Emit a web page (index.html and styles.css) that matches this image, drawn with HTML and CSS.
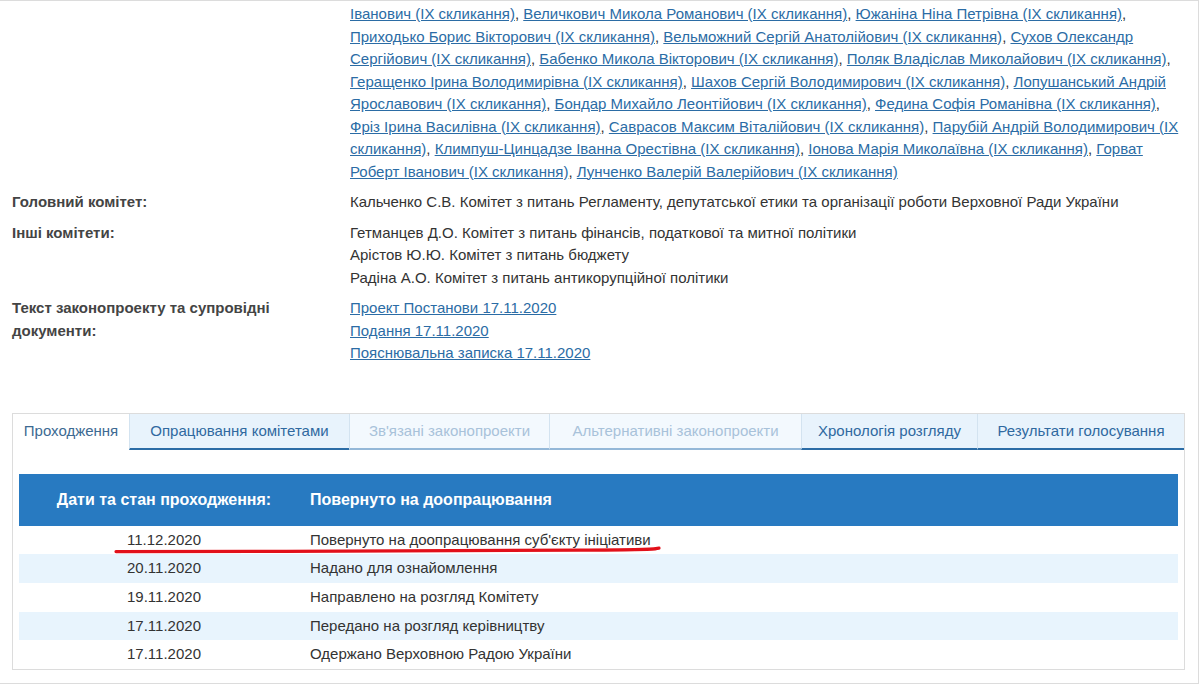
FILE: index.html
```html
<!DOCTYPE html>
<html lang="uk">
<head>
<meta charset="utf-8">
<title>Законопроект</title>
<link rel="stylesheet" href="styles.css">
</head>
<body>
<div class="page">
  <div class="info">
    <div class="label"></div>
    <div class="value"><a href="#">Іванович (IX скликання)</a>, <a href="#">Величкович Микола Романович (IX скликання)</a>, <a href="#">Южаніна Ніна Петрівна (IX скликання)</a>, <a href="#">Приходько Борис Вікторович (IX скликання)</a>, <a href="#">Вельможний Сергій Анатолійович (IX скликання)</a>, <a href="#">Сухов Олександр Сергійович (IX скликання)</a>, <a href="#">Бабенко Микола Вікторович (IX скликання)</a>, <a href="#">Поляк Владіслав Миколайович (IX скликання)</a>, <a href="#">Геращенко Ірина Володимирівна (IX скликання)</a>, <a href="#">Шахов Сергій Володимирович (IX скликання)</a>, <a href="#">Лопушанський Андрій Ярославович (IX скликання)</a>, <a href="#">Бондар Михайло Леонтійович (IX скликання)</a>, <a href="#">Федина Софія Романівна (IX скликання)</a>, <a href="#">Фріз Ірина Василівна (IX скликання)</a>, <a href="#">Саврасов Максим Віталійович (IX скликання)</a>, <a href="#">Парубій Андрій Володимирович (IX скликання)</a>, <a href="#">Климпуш-Цинцадзе Іванна Орестівна (IX скликання)</a>, <a href="#">Іонова Марія Миколаївна (IX скликання)</a>, <a href="#">Горват Роберт Іванович (IX скликання)</a>, <a href="#">Лунченко Валерій Валерійович (IX скликання)</a></div>

    <div class="label">Головний комітет:</div>
    <div class="value">Кальченко С.В. Комітет з питань Регламенту, депутатської етики та організації роботи Верховної Ради України</div>

    <div class="label">Інші комітети:</div>
    <div class="value">
      <div>Гетманцев Д.О. Комітет з питань фінансів, податкової та митної політики</div>
      <div>Арістов Ю.Ю. Комітет з питань бюджету</div>
      <div>Радіна А.О. Комітет з питань антикорупційної політики</div>
    </div>

    <div class="label">Текст законопроекту та супровідні документи:</div>
    <div class="value">
      <div><a href="#">Проект Постанови 17.11.2020</a></div>
      <div><a href="#">Подання 17.11.2020</a></div>
      <div><a href="#">Пояснювальна записка 17.11.2020</a></div>
    </div>
  </div>

  <div class="tabbox">
    <div class="tabs">
      <div class="tab active t1">Проходження</div>
      <div class="tab t2">Опрацювання комітетами</div>
      <div class="tab disabled t3">Зв'язані законопроекти</div>
      <div class="tab disabled t4">Альтернативні законопроекти</div>
      <div class="tab t5">Хронологія розгляду</div>
      <div class="tab t6">Результати голосування</div>
    </div>
    <div class="tabcontent">
      <div class="thead">
        <div class="c1">Дати та стан проходження:</div>
        <div class="c2">Повернуто на доопрацювання</div>
      </div>
      <div class="rows">
        <div class="row"><div class="c1">11.12.2020</div><div class="c2">Повернуто на доопрацювання суб'єкту ініціативи</div></div>
        <div class="row"><div class="c1">20.11.2020</div><div class="c2">Надано для ознайомлення</div></div>
        <div class="row"><div class="c1">19.11.2020</div><div class="c2">Направлено на розгляд Комітету</div></div>
        <div class="row"><div class="c1">17.11.2020</div><div class="c2">Передано на розгляд керівництву</div></div>
        <div class="row"><div class="c1">17.11.2020</div><div class="c2">Одержано Верховною Радою України</div></div>
      </div>
    </div>
  </div>

  <svg class="redline" width="560" height="12" viewBox="0 0 560 12" aria-hidden="true">
    <path d="M6 7.6 C 160 7.4, 380 6.8, 470 6.2 S 540 5, 549 4.2" fill="none" stroke="#e2101a" stroke-width="3.2" stroke-linecap="round"/>
  </svg>
</div>
</body>
</html>
```

FILE: styles.css
```css
html, body {
  margin: 0;
  padding: 0;
  background: #fff;
}

body {
  font-family: "Liberation Sans", Arial, sans-serif;
  font-size: 15px;
  color: #333;
}

.page {
  position: relative;
  width: 1198px;
  border-top: 1px solid #dcdcdc;
  border-right: 1px solid #dcdcdc;
  border-bottom: 1px solid #dcdcdc;
  padding: 2px 0 13px;
}

.info {
  display: grid;
  grid-template-columns: 326px 835px;
  column-gap: 12px;
  row-gap: 8px;
  padding-left: 12px;
  line-height: 22.5px;
}

.label {
  font-weight: bold;
  color: #444;
}

.value {
  color: #333;
}

.value a {
  color: #2b6ca5;
  text-decoration: underline;
}

.tabbox {
  margin: 48px 0 0 12px;
  width: 1171px;
  border: 1px solid #dcdcdc;
}

.tabs {
  display: flex;
  height: 36px;
}

.tab {
  box-sizing: border-box;
  flex: none;
  text-align: center;
  line-height: 34px;
  white-space: nowrap;
  background: #e8f3fc;
  color: #2f69a0;
  border-left: 1px solid #d3e3f0;
  border-bottom: 2px solid #2b6ca6;
}

.t1 { width: 116px; }
.t2 { width: 220px; }
.t3 { width: 200px; }
.t4 { width: 252px; }
.t5 { width: 176px; }
.t6 { flex: 1; }

.tab.active {
  background: #fff;
  color: #3d6a92;
  border-left: none;
  border-bottom-color: #fff;
}

.tab.disabled {
  background: #f3f9fe;
  color: #a8c2da;
  border-bottom-color: #94b8d8;
}

.tabcontent {
  padding: 24px 6px 0;
}

.thead {
  display: flex;
  align-items: center;
  height: 52px;
  background: #287ac1;
  color: #fff;
  font-weight: bold;
  font-size: 16px;
}

.c1 {
  width: 290px;
  flex: none;
  text-align: center;
}

.c2 {
  padding-left: 1px;
}

.row {
  display: flex;
  line-height: 22.5px;
  padding: 3.1px 0;
  color: #333;
}

.row:nth-child(even) {
  background: #e8f4fd;
}

.redline {
  position: absolute;
  left: 110px;
  top: 543px;
  pointer-events: none;
}
```
